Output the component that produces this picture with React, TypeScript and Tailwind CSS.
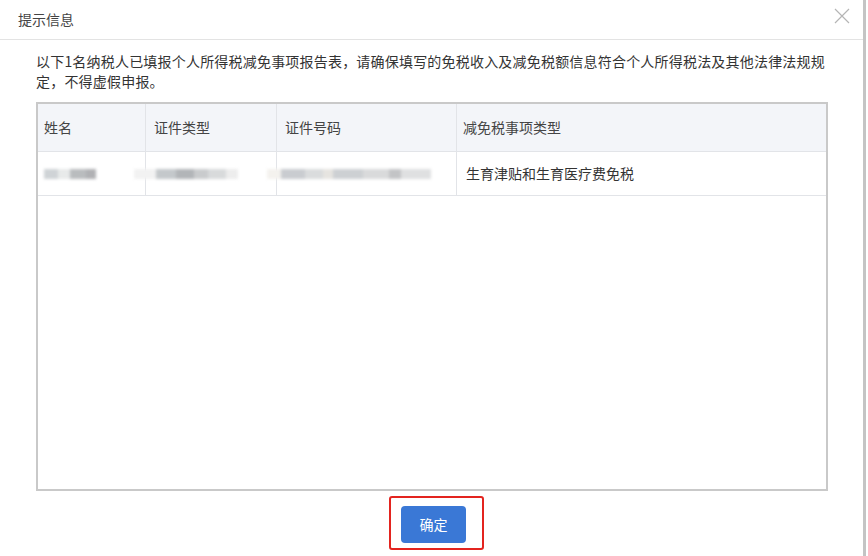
import React from "react";

const font = { fontFamily: '"Noto Sans CJK SC", "Noto Sans", sans-serif' };

function Blur({ segs }: { segs: [number, string][] }) {
  return (
    <div className="flex items-center h-[10px] blur-[1.5px]">
      {segs.map(([w, c], i) => (
        <div key={i} className="h-[10px]" style={{ width: w, background: c }} />
      ))}
    </div>
  );
}

export default function App() {
  return (
    <div className="w-[868px] h-[556px] bg-white flex text-[#333]" style={font}>
      <div className="w-[863px] h-full flex flex-col">
        {/* title bar */}
        <div className="h-[40px] flex items-center justify-between pl-[18px] pr-[13px] border-b border-[#e3e3e3]">
          <span className="text-[14px] text-[#444]">提示信息</span>
          <svg width="16" height="16" viewBox="0 0 16 16" className="mb-[8px]">
            <path d="M1 1L15 15M15 1L1 15" stroke="#b5b5b5" strokeWidth="1.2" fill="none" />
          </svg>
        </div>

        <div className="pl-[36px] pt-[11px]">
          <p className="w-[800px] text-[14px] leading-[20px] tracking-[0.2px] text-[#333]">
            以下1名纳税人已填报个人所得税减免事项报告表，请确保填写的免税收入及减免税额信息符合个人所得税法及其他法律法规规定，不得虚假申报。
          </p>

          <div className="mt-[11px] w-[792px] h-[389px] border-2 border-[#c9c9c9] flex flex-col">
            <div className="flex h-[48px] bg-[#f3f5f9] border-b border-[#e2e4e8] text-[14px] text-[#444]">
              <div className="w-[108px] border-r border-[#e2e4e8] flex items-center pl-[6px]">姓名</div>
              <div className="w-[131px] border-r border-[#e2e4e8] flex items-center pl-[8px]">证件类型</div>
              <div className="w-[180px] border-r border-[#e2e4e8] flex items-center pl-[8px]">证件号码</div>
              <div className="flex-1 flex items-center pl-[6px]">减免税事项类型</div>
            </div>
            <div className="flex h-[44px] border-b border-[#e2e4e8] text-[14px] text-[#333]">
              <div className="w-[108px] border-r border-[#e2e4e8] flex items-center pl-[6px]">
                <Blur segs={[[14, "#cfd3d6"], [12, "#e8eaea"], [16, "#b9bcbe"], [10, "#b0b1b4"]]} />
              </div>
              <div className="w-[131px] border-r border-[#e2e4e8] flex items-center">
                <div className="-ml-[12px]">
                  <Blur segs={[[22, "#f2f2f2"], [20, "#c4c8cb"], [18, "#b2b5b8"], [14, "#c9cbcd"], [18, "#d8dadb"], [12, "#ededed"]]} />
                </div>
              </div>
              <div className="w-[180px] border-r border-[#e2e4e8] flex items-center">
                <div className="-ml-[10px]">
                  <Blur segs={[[14, "#f4f2ee"], [24, "#c9ccd0"], [18, "#dadcdd"], [10, "#e6e4e0"], [30, "#cdd0d3"], [26, "#d9dadb"], [12, "#c3c4c6"], [30, "#dfe0e1"]]} />
                </div>
              </div>
              <div className="flex-1 flex items-center pl-[9px]">生育津贴和生育医疗费免税</div>
            </div>
          </div>
        </div>

        <div className="flex mt-[5px] pl-[389px]">
          <div className="w-[95px] h-[54px] border-2 border-[#e3241f] rounded-[3px] flex items-start pt-[8px] pl-[10px]">
            <button className="w-[65px] h-[37px] bg-[#3a78d6] rounded-[4px] text-white text-[14px]" style={font}>
              确定
            </button>
          </div>
        </div>
      </div>
      <div className="w-[3px] h-full bg-[#c4c4c4]" />
      <div className="w-[2px] h-full bg-white" />
    </div>
  );
}
